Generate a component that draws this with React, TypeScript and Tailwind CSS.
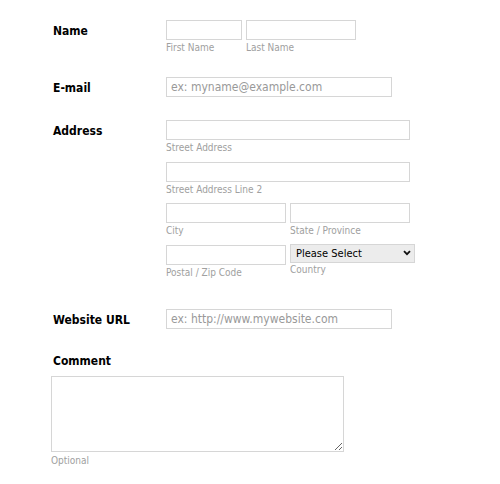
import React from 'react';

const font = { fontFamily: '"DejaVu Sans Condensed", "DejaVu Sans", Tahoma, Verdana, sans-serif' };

const inputCls =
  'block h-[20px] border border-[#d6d6d6] bg-white px-[4px] text-[12px] text-[#333] outline-none placeholder:text-[#999]';

const Sub = ({ children, className = '' }: { children: React.ReactNode; className?: string }) => (
  <div className={`mt-[2px] text-[10px] leading-[12px] text-[#a0a0a0] ${className}`}>{children}</div>
);

const Label = ({ children }: { children: React.ReactNode }) => (
  <div className="w-[115px] shrink-0 pl-[2px] pt-[4px] text-[12px] font-bold leading-[14px] text-black">
    {children}
  </div>
);

const App = () => {
  return (
    <div className="w-[500px] h-[484px] bg-white" style={font}>
      <form className="flex flex-col pl-[51px] pt-[20px]">
        {/* Name */}
        <div className="flex">
          <Label>Name</Label>
          <div className="flex gap-[4px]">
            <div>
              <input type="text" className={`${inputCls} w-[76px]`} />
              <Sub>First Name</Sub>
            </div>
            <div>
              <input type="text" className={`${inputCls} w-[110px]`} />
              <Sub>Last Name</Sub>
            </div>
          </div>
        </div>

        {/* E-mail */}
        <div className="flex mt-[23px]">
          <Label>E-mail</Label>
          <input
            type="text"
            placeholder="ex: myname@example.com"
            className={`${inputCls} w-[226px]`}
          />
        </div>

        {/* Address */}
        <div className="flex mt-[23px]">
          <Label>Address</Label>
          <div className="flex flex-col gap-[8px]">
            <div>
              <input type="text" className={`${inputCls} w-[244px]`} />
              <Sub>Street Address</Sub>
            </div>
            <div>
              <input type="text" className={`${inputCls} w-[244px]`} />
              <Sub>Street Address Line 2</Sub>
            </div>
            <div className="flex gap-[4px] -mt-[1px]">
              <div>
                <input type="text" className={`${inputCls} w-[120px]`} />
                <Sub>City</Sub>
              </div>
              <div>
                <input type="text" className={`${inputCls} w-[120px]`} />
                <Sub>State / Province</Sub>
              </div>
            </div>
            <div className="flex gap-[4px]">
              <div>
                <input type="text" className={`${inputCls} w-[120px]`} />
                <Sub>Postal / Zip Code</Sub>
              </div>
              <div className="-mt-[1px]">
                <div className="relative w-[125px]">
                  <select className="block h-[19px] w-full appearance-none border border-[#d6d6d6] bg-[#ececec] pl-[5px] text-[11px] leading-[17px] text-black outline-none">
                    <option>Please Select</option>
                  </select>
                  <svg
                    className="pointer-events-none absolute right-[4px] top-[6px]"
                    width="8"
                    height="6"
                    viewBox="0 0 8 6"
                  >
                    <path d="M1 1.2 L4 4.2 L7 1.2" fill="none" stroke="#111" strokeWidth="1.8" />
                  </svg>
                </div>
                <Sub className="!mt-[1px]">Country</Sub>
              </div>
            </div>
          </div>
        </div>

        {/* Website URL */}
        <div className="flex mt-[30px]">
          <Label>Website URL</Label>
          <input
            type="text"
            placeholder="ex: http://www.mywebsite.com"
            className={`${inputCls} w-[226px]`}
          />
        </div>

        {/* Comment */}
        <div className="mt-[25px] pl-[2px] text-[12px] font-bold leading-[14px] text-black">Comment</div>
        <textarea className="mt-[8px] block h-[76px] w-[293px] resize border border-[#d6d6d6] bg-white outline-none" />
        <Sub className="!mt-[3px]">Optional</Sub>
      </form>
    </div>
  );
};

export default App;
